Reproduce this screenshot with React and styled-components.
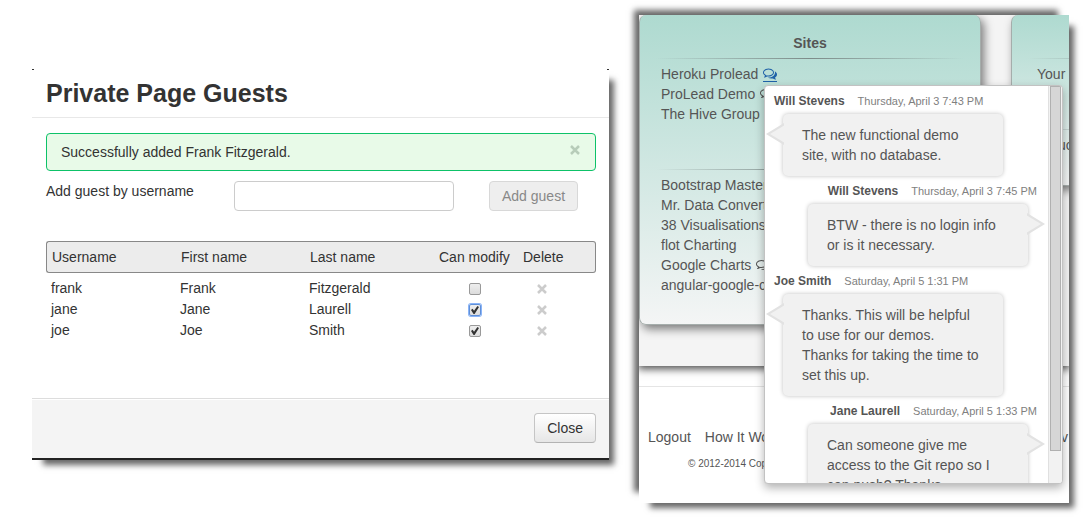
import React, { useState } from "react";
import styled, { createGlobalStyle, css } from "styled-components";

const GlobalStyle = createGlobalStyle`
  *, *::before, *::after { box-sizing: border-box; }
  body {
    margin: 0;
    background: #fff;
    color: #333;
    font: 14px/20px "Liberation Sans", Arial, sans-serif;
  }
  button, input { font: inherit; }
  a { color: inherit; text-decoration: none; }
`;

const Page = styled.main`
  display: grid;
  grid-template-columns: 577fr 430fr;
  align-items: start;
  gap: 30px;
  padding: 15px 15px 15px 32px;
`;

/* Guests dialog */

const Dialog = styled.section`
  margin-top: 54px;
  background: #fff;
  border-bottom: 2px solid #222;
  box-shadow: 8px 8px 6px -3px rgba(0, 0, 0, 0.6);
`;

const DialogHeader = styled.header`
  position: relative;
  padding: 9px 14px;
  border-bottom: 1px solid #e8e8e8;

  &::before,
  &::after {
    content: "";
    position: absolute;
    top: 0;
    width: 2px;
    height: 1px;
    background: #333;
  }
  &::before { left: 0; }
  &::after { right: 0; }
`;

const DialogTitle = styled.h1`
  margin: 0;
  font-size: 25px;
  line-height: 30px;
`;

const DialogBody = styled.div`
  padding: 15px 13px 58px 14px;
`;

const Alert = styled.div`
  display: flex;
  justify-content: space-between;
  padding: 8px 14px;
  border: 1px solid #0dc268;
  border-radius: 4px;
  background: #e8fae8;
`;

const IconButton = styled.button`
  display: flex;
  align-items: center;
  justify-content: center;
  width: 12px;
  height: ${(p) => p.$height}px;
  padding: 0;
  border: 0;
  background: none;
  color: ${(p) => p.$color};
`;

const AddForm = styled.form`
  display: flex;
  margin: 10px 0 30px;
`;

const AddLabel = styled.label`
  width: 188px;
`;

const TextInput = styled.input`
  width: 220px;
  height: 30px;
  margin-right: 35px;
  padding: 4px 6px;
  border: 1px solid #ccc;
  border-radius: 4px;
  background: #fff;
`;

const Button = styled.button`
  height: 30px;
  padding: 4px 12px;
  border: 1px solid #c5c5c5;
  border-bottom-color: #b3b3b3;
  border-radius: 4px;
  background: linear-gradient(#fff, #e6e6e6);
  color: #333;
  line-height: 20px;

  &:disabled {
    border-color: #d8d8d8;
    background: #eee;
    color: #888;
  }
`;

const GuestTable = styled.table`
  width: 100%;
  table-layout: fixed;
  border-spacing: 0;
`;

const HeadCell = styled.th`
  width: ${(p) => p.$width};
  height: 32px;
  padding: 0 0 0 6px;
  border: solid #888;
  border-width: 1px 0;
  background: #ececec;
  font-weight: normal;
  text-align: left;
  white-space: nowrap;

  &:first-child {
    padding-left: 5px;
    border-left-width: 1px;
    border-radius: 3px 0 0 3px;
  }
  &:last-child {
    border-right-width: 1px;
    border-radius: 0 3px 3px 0;
  }
`;

const Cell = styled.td`
  height: 21px;
  padding: 0 0 0 ${(p) => p.$pad ?? 5}px;
  vertical-align: bottom;

  tr:first-child > & {
    height: 25px;
  }
`;

const Checkbox = styled.input`
  appearance: none;
  display: block;
  position: relative;
  width: 12px;
  height: 12px;
  margin: 0 auto 3px;
  border: 1px solid #999;
  border-radius: 2px;
  background: linear-gradient(#eee, #dcdcdc);
  ${(p) => p.$focused && css`box-shadow: 0 0 0 1px #8ab4f8; border-color: #5f8fd8;`}

  &:checked::after {
    content: "";
    position: absolute;
    inset: 1px;
    background: #333;
    clip-path: polygon(0 50%, 20% 35%, 38% 58%, 80% 0, 100% 14%, 45% 100%, 32% 100%);
  }
`;

const DialogFooter = styled.footer`
  display: flex;
  justify-content: flex-end;
  padding: 14px 13px 15px;
  border-top: 1px solid #ddd;
  background: #f4f4f4;
  box-shadow: inset 0 1px 0 #fff;
`;

/* Site dashboard */

const Dashboard = styled.section`
  position: relative;
  min-width: 0;
  background: #fff;
  color: #555;
  box-shadow:
    8px 8px 6px -3px rgba(0, 0, 0, 0.6),
    -8px -8px 6px -3px rgba(0, 0, 0, 0.6);
`;

const Clip = styled.div`
  overflow: hidden;
`;

const CardStrip = styled.div`
  display: flex;
  align-items: flex-start;
  gap: 30px;
  padding-bottom: 41px;
  background: #f4f4f4;
  box-shadow: 0 2px 8px 1px rgba(0, 0, 0, 0.7);
`;

const Card = styled.article`
  flex: none;
  width: 342px;
  padding: 18px 16px ${(p) => p.$bottom}px;
  border: 1px solid #a5adab;
  border-width: 0 1px 1px;
  border-radius: 7px;
  background: linear-gradient(#aedad0, #f4f5f5);
  box-shadow: 3px 4px 10px rgba(0, 0, 0, 0.5);
`;

const CardTitle = styled.h2`
  height: 20px;
  margin: 0;
  font-size: 14px;
  line-height: 20px;
  text-align: center;
`;

const Divider = styled.div`
  height: 1px;
  margin: ${(p) => p.$top}px 0 5px;
  background: linear-gradient(to right, transparent, #7d8b89 50%, transparent);
`;

const LinkList = styled.ul`
  margin: 0;
  padding: 0 0 0 ${(p) => p.$indent ?? 5}px;
  list-style: none;
  white-space: nowrap;
`;

const CommentLink = styled.a`
  margin-left: 5px;
  ${(p) => p.$active && css`color: #1f62a8;`}

  svg {
    vertical-align: -3px;
    ${(p) => p.$active && css`border-bottom: 1px solid currentColor;`}
  }
`;

const PageFooter = styled.footer`
  margin-top: 20px;
  padding: 40px 0 29px;
  border-top: 1px solid #e5e5e5;
`;

const FooterNav = styled.nav`
  display: flex;
  gap: 14px;
  padding: 0 1px 0 9px;

  a:last-child { margin-left: auto; }
`;

const Copyright = styled.p`
  margin: 7px 0 0;
  padding-left: 49px;
  font-size: 10px;
`;

/* Conversation popup */

const Popup = styled.aside`
  position: absolute;
  top: 70px;
  right: 6px;
  bottom: 19px;
  left: 125px;
  display: flex;
  overflow: hidden;
  border: 1px solid #c2c2c2;
  border-radius: 4px;
  background: #fff;
`;

const PopupShadow = styled(Popup)`
  overflow: visible;
  box-shadow: 0 4px 10px rgba(0, 0, 0, 0.3);
`;

const Messages = styled.div`
  flex: 1;
  padding: 0 11px 0 9px;
`;

const Message = styled.div`
  display: flex;
  flex-direction: column;
  align-items: ${(p) => (p.$mine ? "flex-end" : "flex-start")};
`;

const MessageHeader = styled.div`
  display: flex;
  align-items: center;
  gap: 13px;
  height: 28px;
  padding-top: 2px;
  font-size: 11px;
  color: #808080;
  white-space: nowrap;
`;

const Author = styled.strong`
  color: #555;
  font-size: 12px;
`;

const Bubble = styled.div`
  position: relative;
  width: 220px;
  margin: 0 9px;
  padding: 11px 20px 11px 19px;
  border-radius: 5px;
  background: #f1f1f1;
  box-shadow: 0 0 4px rgba(0, 0, 0, 0.25);
`;

const Tail = styled.svg`
  position: absolute;
  top: 8px;
  ${(p) => (p.$mine ? "right: -18px; transform: scaleX(-1);" : "left: -18px;")}
`;

const ScrollTrack = styled.div`
  width: 14px;
  border-left: 1px solid #e0e0e0;
  background: #f2f2f2;
`;

const ScrollThumb = styled.div`
  width: 11px;
  height: 92%;
  margin: 0 1px;
  border: 1px solid #b0b0b0;
  background: #d6d6d6;
`;

const CrossIcon = () => (
  <svg width="10" height="10" viewBox="0 0 10 10" aria-hidden="true">
    <path d="M1 1L9 9M9 1L1 9" stroke="currentColor" strokeWidth="2.5" />
  </svg>
);

const CommentsIcon = () => (
  <svg width="14" height="15" viewBox="0 128 1792 1664" fill="currentColor" aria-hidden="true">
    <path d="M704 384q-153 0-286 52t-211.5 141-78.5 191q0 82 53 158t149 132l97 56-35 84q34-20 62-39l44-31 53 10q78 14 153 14 153 0 286-52t211.5-141 78.5-191-78.5-191-211.5-141-286-52zm0-128q191 0 353.5 68.5t256.5 186.5 94 257-94 257-256.5 186.5-353.5 68.5q-86 0-176-16-124 88-278 128-36 9-86 16h-3q-11 0-20.5-8t-11.5-21q-1-3-1-6.5t.5-6.5 2-6l2.5-5 3.5-5.5 4-5 4.5-5 4-4.5q5-6 23-25t26-29.5 22.5-29 25-38.5 20.5-44q-124-72-195-177t-71-224q0-139 94-257t256.5-186.5 353.5-68.5zm822 1169q10 24 20.5 44t25 38.5 22.5 29 26 29.5 23 25q1 1 4 4.5t4.5 5 4 5 3.5 5.5l2.5 5 2 6 .5 6.5-1 6.5q-3 14-13 22t-22 7q-50-7-86-16-154-40-278-128-90 16-176 16-271 0-472-132 58 4 88 4 161 0 309-45t264-129q125-92 192-212t67-254q0-77-23-152 129 71 204 178t75 230q0 120-71 224.5t-195 176.5z" />
  </svg>
);

const guests = [
  { username: "frank", first: "Frank", last: "Fitzgerald", canModify: false },
  { username: "jane", first: "Jane", last: "Laurell", canModify: true, focused: true },
  { username: "joe", first: "Joe", last: "Smith", canModify: true },
];

const messages = [
  { author: "Will Stevens", date: "Thursday, April 3 7:43 PM", text: "The new functional demo site, with no database." },
  { author: "Will Stevens", date: "Thursday, April 3 7:45 PM", text: "BTW - there is no login info or is it necessary.", mine: true },
  { author: "Joe Smith", date: "Saturday, April 5 1:31 PM", text: "Thanks. This will be helpful to use for our demos. Thanks for taking the time to set this up." },
  { author: "Jane Laurell", date: "Saturday, April 5 1:33 PM", text: "Can someone give me access to the Git repo so I can push? Thanks.", mine: true },
];

const sites = [
  { name: "Heroku Prolead", comments: true, active: true },
  { name: "ProLead Demo", comments: true },
  { name: "The Hive Group" },
];

const tools = [
  { name: "Bootstrap Master" },
  { name: "Mr. Data Converter" },
  { name: "38 Visualisations" },
  { name: "flot Charting" },
  { name: "Google Charts", comments: true },
  { name: "angular-google-chart" },
];

const Links = ({ items }) => (
  <LinkList>
    {items.map((item) => (
      <li key={item.name}>
        <a href="#">{item.name}</a>
        {item.comments && (
          <CommentLink href="#" $active={item.active} aria-label={`Comments on ${item.name}`}>
            <CommentsIcon />
          </CommentLink>
        )}
      </li>
    ))}
  </LinkList>
);

function GuestRow({ guest }) {
  const [canModify, setCanModify] = useState(guest.canModify);
  return (
    <tr>
      <Cell>{guest.username}</Cell>
      <Cell>{guest.first}</Cell>
      <Cell>{guest.last}</Cell>
      <Cell $pad={0}>
        <Checkbox
          type="checkbox"
          aria-label={`${guest.username} can modify`}
          checked={canModify}
          onChange={(e) => setCanModify(e.target.checked)}
          $focused={guest.focused}
        />
      </Cell>
      <Cell $pad={19}>
        <IconButton type="button" $height={18} $color="#ccc" aria-label={`Delete ${guest.username}`}>
          <CrossIcon />
        </IconButton>
      </Cell>
    </tr>
  );
}

function GuestsDialog() {
  return (
    <Dialog>
      <DialogHeader>
        <DialogTitle>Private Page Guests</DialogTitle>
      </DialogHeader>
      <DialogBody>
        <Alert role="status">
          <span>Successfully added Frank Fitzgerald.</span>
          <IconButton type="button" $height={16} $color="#b7ccb9" aria-label="Dismiss">
            <CrossIcon />
          </IconButton>
        </Alert>
        <AddForm onSubmit={(e) => e.preventDefault()}>
          <AddLabel htmlFor="guest-username">Add guest by username</AddLabel>
          <TextInput id="guest-username" type="text" />
          <Button type="submit" disabled>Add guest</Button>
        </AddForm>
        <GuestTable>
          <thead>
            <tr>
              <HeadCell $width="129px">Username</HeadCell>
              <HeadCell $width="129px">First name</HeadCell>
              <HeadCell $width="129px">Last name</HeadCell>
              <HeadCell $width="84px">Can modify</HeadCell>
              <HeadCell $width="auto">Delete</HeadCell>
            </tr>
          </thead>
          <tbody>
            {guests.map((guest) => (
              <GuestRow key={guest.username} guest={guest} />
            ))}
          </tbody>
        </GuestTable>
      </DialogBody>
      <DialogFooter>
        <Button type="button">Close</Button>
      </DialogFooter>
    </Dialog>
  );
}

function Conversation() {
  return (
    <>
      <PopupShadow as="div" />
      <Popup aria-label="Conversation">
        <Messages>
          {messages.map((m) => (
            <Message key={m.date} $mine={m.mine}>
              <MessageHeader>
                <Author>{m.author}</Author>
                <time>{m.date}</time>
              </MessageHeader>
              <Bubble>
                <Tail $mine={m.mine} width="20" height="24" viewBox="0 0 20 24" aria-hidden="true">
                  <path d="M19 1L1 12L19 23Z" fill="#e2e2e2" />
                  <path d="M20 3L5 12L20 21Z" fill="#f1f1f1" />
                </Tail>
                {m.text}
              </Bubble>
            </Message>
          ))}
        </Messages>
        <ScrollTrack>
          <ScrollThumb />
        </ScrollTrack>
      </Popup>
    </>
  );
}

export default function App() {
  return (
    <>
      <GlobalStyle />
      <Page>
        <GuestsDialog />
        <Dashboard>
          <Clip>
            <CardStrip>
              <Card $bottom={29}>
                <CardTitle>Sites</CardTitle>
                <Divider $top={5} />
                <Links items={sites} />
                <Divider $top={45} />
                <Links items={tools} />
              </Card>
              <Card $bottom={30}>
                <CardTitle />
                <Divider $top={5} />
                <LinkList $indent={9}>
                  <li><a href="#">Your</a></li>
                </LinkList>
                <Divider $top={45} />
                <LinkList $indent={30}>
                  <li><a href="#">uc</a></li>
                </LinkList>
              </Card>
            </CardStrip>
            <PageFooter>
              <FooterNav>
                <a href="#">Logout</a>
                <a href="#">How It Works</a>
                <a href="#">v</a>
              </FooterNav>
              <Copyright>© 2012-2014 Copyright</Copyright>
            </PageFooter>
          </Clip>
          <Conversation />
        </Dashboard>
      </Page>
    </>
  );
}
